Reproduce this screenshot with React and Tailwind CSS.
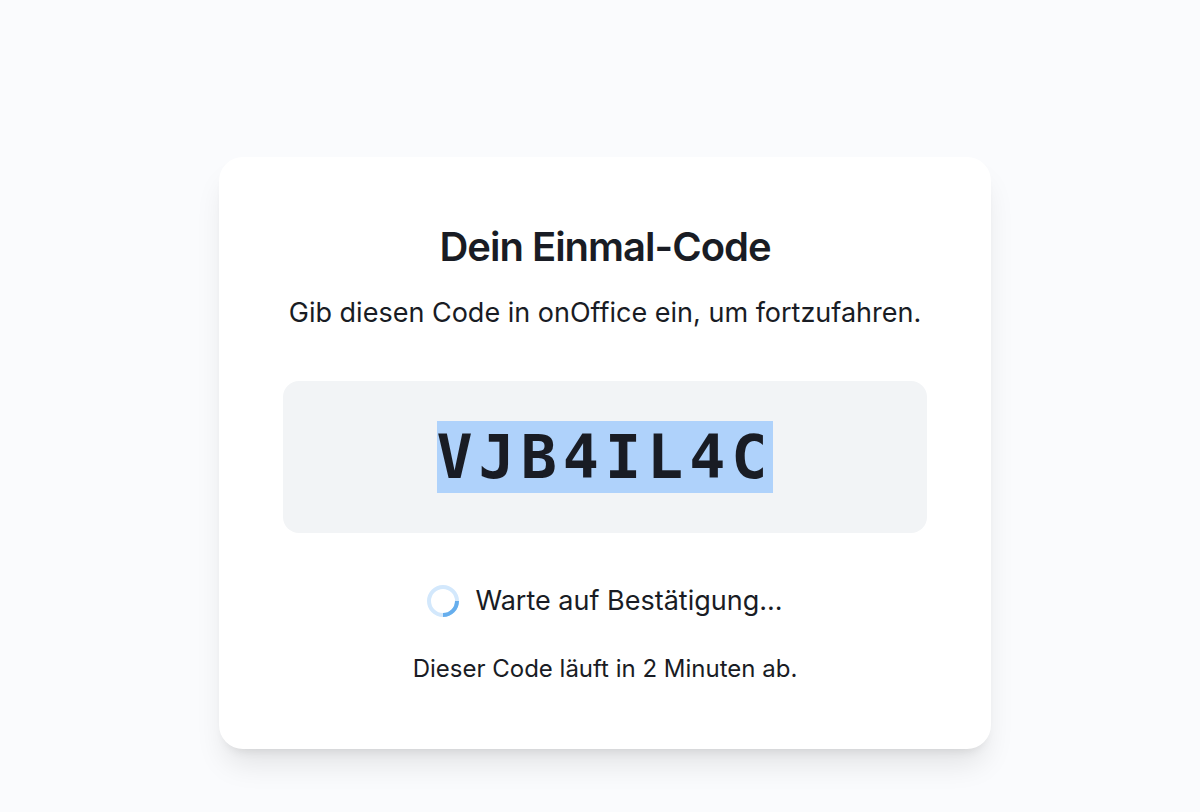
const Spinner = () => (
  <svg className="size-8 shrink-0" viewBox="0 0 32 32" fill="none" aria-hidden="true">
    <circle cx="16" cy="16" r="14" stroke="#d3e8fc" strokeWidth="4" />
    <path d="M30 16A14 14 0 0 1 16 30" stroke="#66aeed" strokeWidth="4" />
  </svg>
)

const CodeCard = ({ code, minutes }) => {
  return (
    <section className="w-full max-w-[772px] rounded-3xl bg-white p-16 text-center shadow-[0_20px_30px_-6px_rgba(0,0,0,0.1),0_8px_12px_-8px_rgba(0,0,0,0.12)]">
      <h1 className="text-[40px] leading-[52px] font-semibold tracking-tight">Dein Einmal-Code</h1>
      <p className="mt-5 text-[27px] leading-10">Gib diesen Code in onOffice ein, um fortzufahren.</p>

      {/* Einmal-Code */}
      <div className="mt-12 flex justify-center rounded-2xl bg-[#f2f4f6] p-10">
        <span className="bg-[#afd2fb] font-['DejaVu_Sans_Mono',monospace] text-[60px] leading-[72px] font-bold tracking-widest">
          {code}
        </span>
      </div>

      {/* Status */}
      <div className="mt-12 flex items-center justify-center gap-4" role="status">
        <Spinner />
        <span className="text-[27px] leading-10">Warte auf Bestätigung...</span>
      </div>
      <p className="mt-8 text-2xl">Dieser Code läuft in {minutes} Minuten ab.</p>
    </section>
  )
}

export default function App() {
  return (
    <main className="flex min-h-screen items-start justify-center bg-[#fafbfd] pt-[157px] pb-14 pl-2.5 font-['Inter',sans-serif] text-[#191c24]">
      <CodeCard code="VJB4IL4C" minutes={2} />
    </main>
  )
}
